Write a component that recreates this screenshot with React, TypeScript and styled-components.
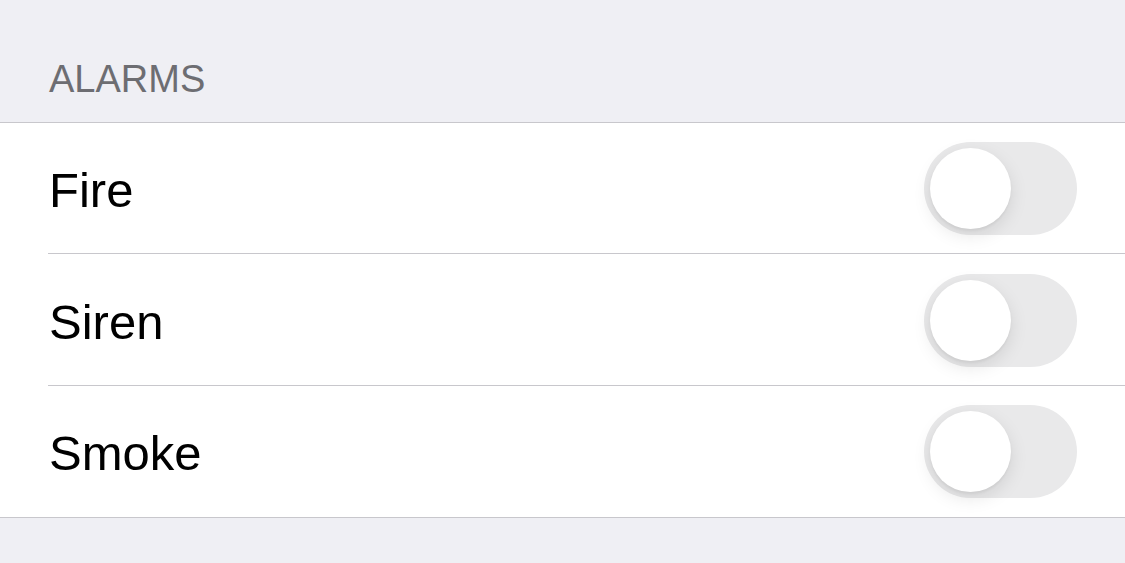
import React, { useState } from "react";
import styled, { createGlobalStyle } from "styled-components";

const Global = createGlobalStyle`
  html, body { margin: 0; padding: 0; background: #efeff4; }
  body { font-family: "Liberation Sans", Arial, sans-serif; -webkit-font-smoothing: antialiased; }
  * { box-sizing: border-box; }
`;

const Page = styled.div`
  width: 1125px;
  height: 563px;
  background: #efeff4;
  overflow: hidden;
`;

const SectionHeader = styled.div`
  height: 122px;
  padding: 56px 0 0 49px;
  font-size: 38px;
  line-height: 46px;
  color: #6d6d72;
`;

const Section = styled.div`
  background: #ffffff;
  border-top: 1px solid #c8c7cc;
  border-bottom: 1px solid #c8c7cc;
`;

const Row = styled.div<{ $last?: boolean }>`
  position: relative;
  height: 131.4px;
  display: flex;
  align-items: center;
  justify-content: space-between;
  padding: 0 48px 0 49px;
  &::after {
    content: "";
    position: absolute;
    left: 48px;
    right: 0;
    bottom: 0;
    height: 1px;
    background: ${(p) => (p.$last ? "transparent" : "#c8c7cc")};
  }
`;

const Label = styled.span`
  font-size: 49px;
  line-height: 58px;
  color: #000;
  padding-top: 3px;
`;

const Track = styled.button<{ $on: boolean }>`
  position: relative;
  width: 153px;
  height: 93px;
  border: none;
  padding: 0;
  border-radius: 46.5px;
  background: ${(p) => (p.$on ? "#4cd964" : "#e9e9ea")};
  cursor: pointer;
  outline: none;
`;

const Thumb = styled.span<{ $on: boolean }>`
  position: absolute;
  top: 6px;
  left: ${(p) => (p.$on ? "66px" : "6px")};
  width: 81px;
  height: 81px;
  border-radius: 50%;
  background: #fff;
  box-shadow: 0 6px 18px rgba(0, 0, 0, 0.1), 0 2px 3px rgba(0, 0, 0, 0.05);
`;

const Toggle = () => {
  const [on, setOn] = useState(false);
  return (
    <Track $on={on} onClick={() => setOn(!on)}>
      <Thumb $on={on} />
    </Track>
  );
};

const items = ["Fire", "Siren", "Smoke"];

export default function App() {
  return (
    <Page>
      <Global />
      <SectionHeader>ALARMS</SectionHeader>
      <Section>
        {items.map((it, i) => (
          <Row key={it} $last={i === items.length - 1}>
            <Label>{it}</Label>
            <Toggle />
          </Row>
        ))}
      </Section>
    </Page>
  );
}
